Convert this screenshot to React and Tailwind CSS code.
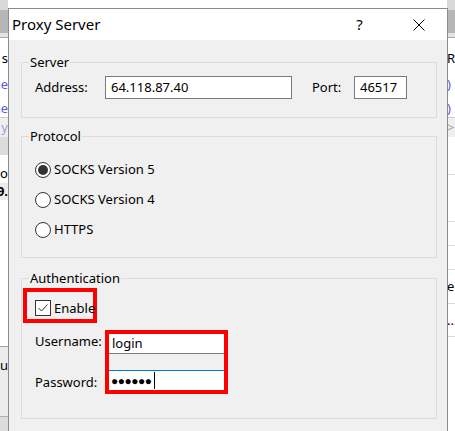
import React from "react";

const font = { fontFamily: '"Noto Sans", "Segoe UI", sans-serif' };

function LeftStrip() {
  return (
    <div className="w-[8px] h-full flex flex-col shrink-0 overflow-hidden text-[13px] leading-none">
      <div className="h-[10px] bg-[#d9d9d9]" />
      <div className="h-[23px] bg-[#b6b6b6]" />
      <div className="h-[4px] bg-[#e4e4e4]" />
      <div className="h-[1px] bg-[#a8a8a8]" />
      <div className="h-[12px] bg-white" />
      <div className="h-[16px] bg-white flex justify-end items-center">s</div>
      <div className="h-[10px] bg-white" />
      <div className="h-[16px] bg-white flex justify-end items-center text-[#5a5ad8]">ne</div>
      <div className="h-[8px] bg-white" />
      <div className="h-[16px] bg-white flex justify-end items-center text-[#5a5ad8]">ne</div>
      <div className="h-[2px] bg-white border-b border-[#d0d0d0]" />
      <div className="h-[19px] bg-[#efefef] flex justify-end items-center text-[#a0a0d0]">y</div>
      <div className="h-[18px] bg-[#dcdcdc]" />
      <div className="h-[28px] bg-white flex justify-end items-center pt-[8px]">do</div>
      <div className="h-[17px] bg-[#ebebeb] flex justify-end items-center font-bold">9.</div>
      <div className="h-[147px] bg-white border-b border-[#a0a0a0]" />
      <div className="h-[70px] bg-[#ececec] flex justify-end items-start pt-[12px] border-b border-[#b0b0b0]">u</div>
      <div className="grow bg-[#dcdcdc]" />
    </div>
  );
}

function RightStrip() {
  return (
    <div className="w-[8px] h-full flex flex-col shrink-0 overflow-hidden text-[13px] leading-none">
      <div className="h-[10px] bg-[#d9d9d9]" />
      <div className="h-[23px] bg-[#b6b6b6]" />
      <div className="h-[4px] bg-[#e4e4e4]" />
      <div className="h-[1px] bg-[#a8a8a8]" />
      <div className="h-[12px] bg-white" />
      <div className="h-[16px] bg-white flex items-center">Re</div>
      <div className="h-[10px] bg-white" />
      <div className="h-[16px] bg-white flex items-center text-[#5a5ad8]">)</div>
      <div className="h-[8px] bg-white" />
      <div className="h-[16px] bg-white flex items-center text-[#5a5ad8]">)</div>
      <div className="h-[2px] bg-white border-b border-[#d0d0d0]" />
      <div className="h-[19px] bg-[#efefef] flex items-center text-[#a0a0a0]">&gt;</div>
      <div className="h-[38px] bg-white border-b border-[#dadada]" />
      <div className="h-[47px] bg-white border-b border-[#dadada]" />
      <div className="h-[24px] bg-white border-b border-[#dadada]" />
      <div className="h-[24px] bg-white border-b border-[#dadada]" />
      <div className="h-[34px] bg-white border-b border-[#dadada] flex items-center">e</div>
      <div className="h-[33px] bg-white border-b border-[#dadada] flex items-center">...</div>
      <div className="grow bg-white" />
    </div>
  );
}

function Radio({ checked, label }) {
  return (
    <div className="h-[20px] flex items-center gap-[3px]">
      <span className="w-[16px] h-[16px] rounded-full border border-[#333] bg-white flex items-center justify-center">
        {checked && <span className="w-[10px] h-[10px] rounded-full bg-[#333]" />}
      </span>
      <span>{label}</span>
    </div>
  );
}

function Group({ title, className, children }) {
  return (
    <fieldset className={"border border-[#dcdcdc] w-[416px] pl-[13px] " + className}>
      <legend className="-ml-[6px] px-[1px] leading-[16px]">{title}</legend>
      {children}
    </fieldset>
  );
}

export default function App() {
  return (
    <div className="relative w-[455px] h-[431px] overflow-hidden flex justify-between bg-white" style={font}>
      <LeftStrip />
      <RightStrip />

      {/* Dialog */}
      <div className="absolute left-[8px] top-[8px] w-[440px] h-[440px] border border-[#8c8c8c] bg-[#f0f0f0] text-[13px] text-black">
        {/* Title bar */}
        <div className="h-[31px] bg-white flex items-center">
          <span className="pl-[3px] text-[15px] grow">Proxy Server</span>
          <span className="w-[57px] h-full flex items-center justify-center text-[15px] pr-[4px]">?</span>
          <span className="w-[57px] h-full flex items-center justify-center">
            <svg width="12" height="12" viewBox="0 0 12 12">
              <path d="M0.5 0.5 L11.5 11.5 M11.5 0.5 L0.5 11.5" stroke="#000" strokeWidth="1" />
            </svg>
          </span>
        </div>

        <div className="pt-[14px] pl-[12px]">
          <Group title="Server" className="pt-[6px] pb-[18px]">
            <div className="flex items-center h-[23px]">
              <span className="w-[70px]">Address:</span>
              <div className="w-[187px] h-[23px] border border-[#7a7a7a] bg-white flex items-center pl-[5px]">64.118.87.40</div>
              <span className="ml-[20px] w-[42px]">Port:</span>
              <div className="w-[53px] h-[23px] border border-[#7a7a7a] bg-white flex items-center pl-[5px]">46517</div>
            </div>
          </Group>

          <Group title="Protocol" className="mt-[10px] pt-[16px] pb-[17px]">
            <div className="flex flex-col gap-[10px]">
              <Radio checked label="SOCKS Version 5" />
              <Radio label="SOCKS Version 4" />
              <Radio label="HTTPS" />
            </div>
          </Group>

          <Group title="Authentication" className="mt-[12px] pt-[2px] pb-[23px]">
            <div className="-ml-[12px] w-[74px] h-[35px] border-[4px] border-[#ff0000] pl-[8px] pr-[1px] pt-[8px] flex items-start gap-[3px]">
              <span className="w-[16px] h-[16px] border border-[#333] bg-white shrink-0 flex items-center justify-center">
                <svg width="14" height="14" viewBox="0 0 14 14">
                  <path d="M2.5 7 L5.5 10 L11.5 3.5" fill="none" stroke="#333" strokeWidth="1" />
                </svg>
              </span>
              <span className="leading-[16px]">Enable</span>
            </div>

            <div className="flex mt-[7px]">
              <div className="w-[70px] flex flex-col">
                <span className="h-[24px] flex items-center">Username:</span>
                <span className="h-[24px] mt-[17px] flex items-center">Password:</span>
              </div>
              <div className="w-[123px] h-[64px] border-[4px] border-[#ff0000] flex flex-col">
                <div className="h-[20px] bg-white border-b border-[#7a7a7a] flex items-center pl-[3px]">login</div>
                <div className="h-[16px] bg-[#f0f0f0]" />
                <div className="h-[20px] bg-white border-t border-[#0078d7] flex items-center pl-[2px]">
                  <span className="text-[12px] leading-none tracking-[-0.5px]">●●●●●●</span>
                  <span className="ml-[2px] w-[1px] h-[17px] bg-black" />
                </div>
              </div>
            </div>
          </Group>
        </div>
      </div>
    </div>
  );
}
